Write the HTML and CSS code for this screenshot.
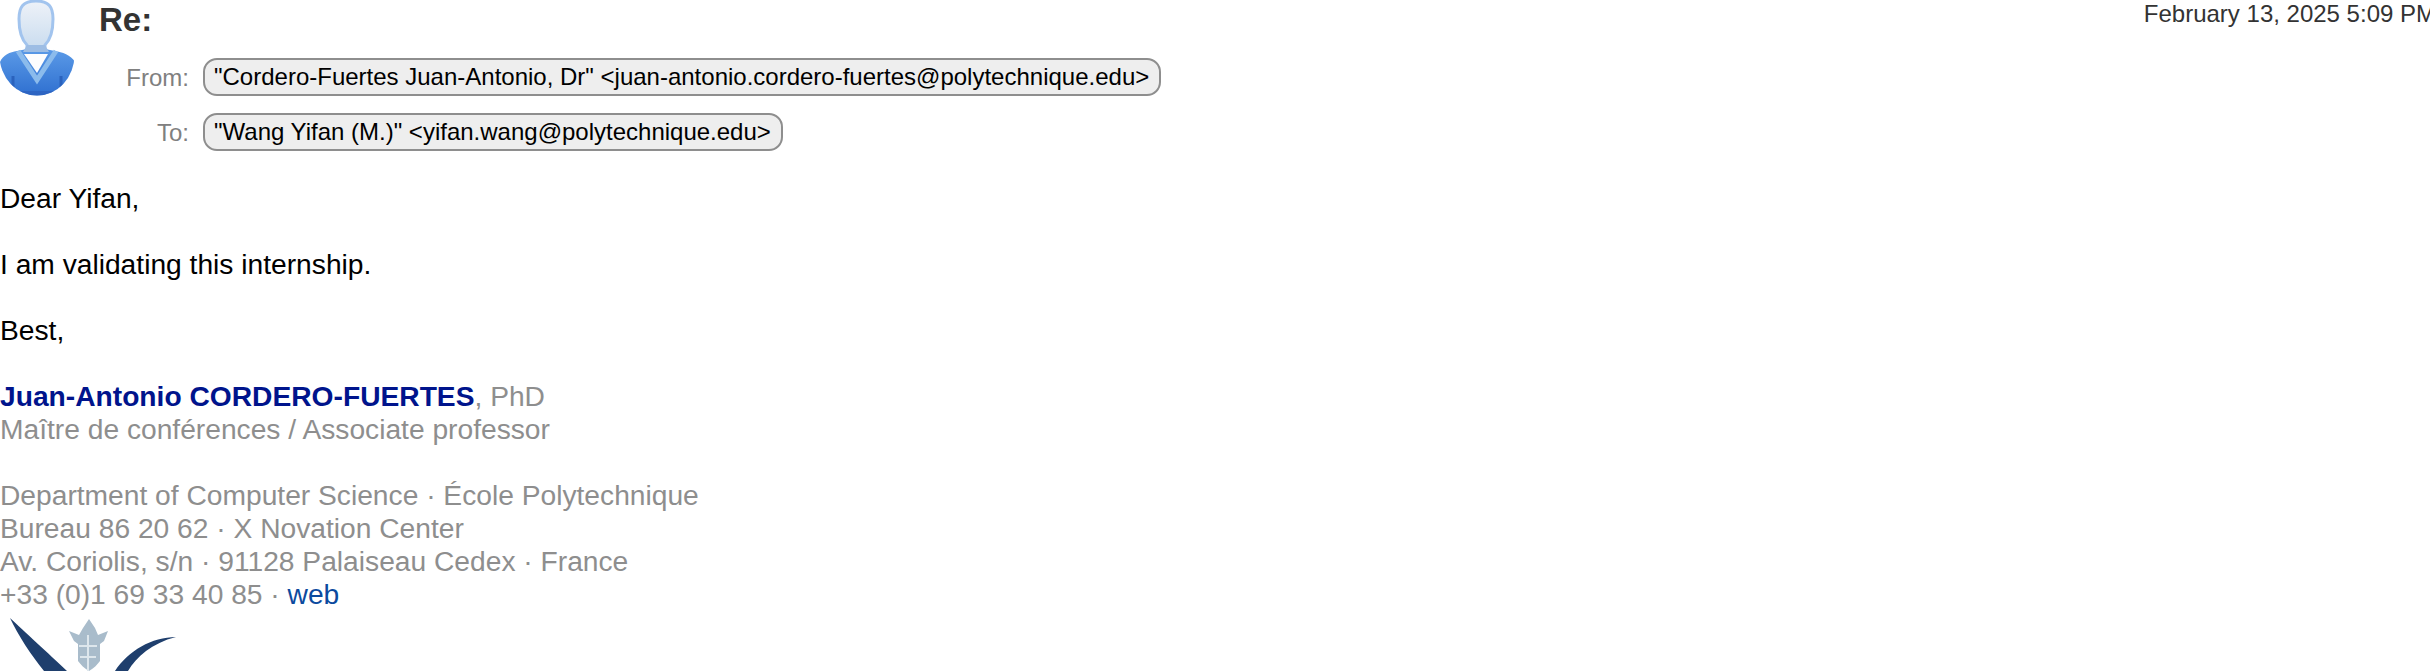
FILE: index.html
```html
<!DOCTYPE html>
<html lang="en">
<head>
<meta charset="utf-8">
<title>Re:</title>
<link rel="stylesheet" href="styles.css">
</head>
<body>
<div class="mail">
  <header class="head">
    <svg class="avatar" viewBox="0 0 75 96" aria-hidden="true">
      <defs>
        <linearGradient id="face" x1="0" y1="0" x2="0" y2="1"><stop offset="0" stop-color="#eef2f8"/><stop offset="1" stop-color="#c9dcef"/></linearGradient>
        <linearGradient id="suit" x1="0" y1="0" x2="0" y2="1"><stop offset="0" stop-color="#5d9ce8"/><stop offset="1" stop-color="#2e6fd0"/></linearGradient>
        <clipPath id="round"><ellipse cx="37" cy="55" rx="37.5" ry="40.5"/></clipPath>
      </defs>
      <path d="M36 1c13 0 17 6 17 18 0 11-3 21-8 26v4H27v-4c-5-5-8-15-8-26C19 7 23 1 36 1z" fill="url(#face)" stroke="#a2c4ee" stroke-width="3"/>
      <g clip-path="url(#round)">
        <path d="M0 96V62c3-7 10-10 17-11l10-2c6-2 12-2 18 0l10 2c7 1 16 4 20 11v34z" fill="url(#suit)"/>
        <path d="M27 45h18l4 7H23z" fill="#9dbde4"/>
        <path d="M24 54h24L37 73z" fill="#fdfdfe"/>
        <path d="M18 51l19 29 19-29" fill="none" stroke="#8bbbec" stroke-width="5"/>
        <path d="M13 76v20M61 76v20" stroke="#2a62bd" stroke-width="3"/>
        <path d="M0 91h75v5H0z" fill="#2c60bc" opacity=".7"/>
      </g>
    </svg>
    <div class="fields">
      <div class="subject-row">
        <h1 class="subject">Re:</h1>
        <time class="date">February 13, 2025 5:09 PM</time>
      </div>
      <div class="addr-row">
        <span class="addr-label">From:</span>
        <span class="pill">"Cordero-Fuertes Juan-Antonio, Dr" &lt;juan-antonio.cordero-fuertes@polytechnique.edu&gt;</span>
      </div>
      <div class="addr-row">
        <span class="addr-label">To:</span>
        <span class="pill">"Wang Yifan (M.)" &lt;yifan.wang@polytechnique.edu&gt;</span>
      </div>
    </div>
  </header>
  <main class="body">
    <p>Dear Yifan,</p>
    <p>I am validating this internship.</p>
    <p>Best,</p>
    <p class="sig"><strong class="name">Juan-Antonio CORDERO-FUERTES</strong>, PhD<br>Maître de conférences / Associate professor</p>
    <p class="sig">Department of Computer Science · École Polytechnique<br>Bureau 86 20 62 · X Novation Center<br>Av. Coriolis, s/n · 91128 Palaiseau Cedex · France<br>+33 (0)1 69 33 40 85 · <span class="web">web</span></p>
    <svg class="logo" viewBox="0 0 180 60" aria-hidden="true">
      <path d="M10 7C24 20 48 42 67 60H44C31 44 18 24 10 7z" fill="#1f3f6d"/>
      <path d="M176 26c-24 0-48 14-61 34h13c8-14 24-28 48-34z" fill="#1f3f6d"/>
      <path d="M69 20l10 4 4-7 6-9 6 9 3 7 10-4-4 10-4 3v17c-3 4-6 7-11 10-5-3-8-6-11-10V33l-4-3z" fill="#a9bccb"/>
      <path d="M88 24v36M79 35h18M80 46h16" stroke="#dde6ec" stroke-width="2" fill="none"/>
    </svg>
  </main>
</div>
</body>
</html>
```
FILE: styles.css
```css
html, body {
  margin: 0;
  height: 672px;
  overflow: hidden;
  background: #fff;
}
.mail {
  width: 2430px;
  font-family: "Liberation Sans", Arial, sans-serif;
  color: #000;
}
.head {
  display: flex;
  align-items: flex-start;
  height: 182px;
}
.avatar {
  width: 75px;
  height: 96px;
  flex: none;
}
.fields {
  flex: 1;
  min-width: 0;
  padding-left: 24px;
}
.subject-row {
  display: flex;
  justify-content: space-between;
  height: 58px;
}
.subject {
  margin: 0;
  font-size: 33px;
  line-height: 40px;
  font-weight: 700;
  color: #333;
}
.date {
  font-size: 24px;
  line-height: 28px;
  color: #333;
  white-space: nowrap;
  margin-right: -6px;
}
.addr-row {
  display: flex;
  align-items: center;
  height: 38px;
  margin-bottom: 17px;
  margin-left: -99px;
}
.addr-label {
  width: 189px;
  padding-top: 2px;
  text-align: right;
  font-size: 24px;
  line-height: 38px;
  color: #808080;
  flex: none;
}
.pill {
  margin-left: 14px;
  padding: 0 10px 0 9px;
  height: 38px;
  box-sizing: border-box;
  line-height: 34px;
  font-size: 24px;
  border: 2px solid #8e8e8e;
  border-radius: 14px;
  background: #eeeeee;
  white-space: nowrap;
}
.body {
  font-size: 28.2px;
  line-height: 33px;
}
.body p {
  margin: 0 0 33px;
}
.body .sig {
  color: #8e8e8e;
}
.name {
  color: #00148c;
}
.web {
  color: #0b4a9e;
}
.body .sig:last-of-type {
  margin-bottom: 0;
}
.logo {
  display: block;
  width: 180px;
  height: 60px;
  filter: blur(0.5px);
}
```
